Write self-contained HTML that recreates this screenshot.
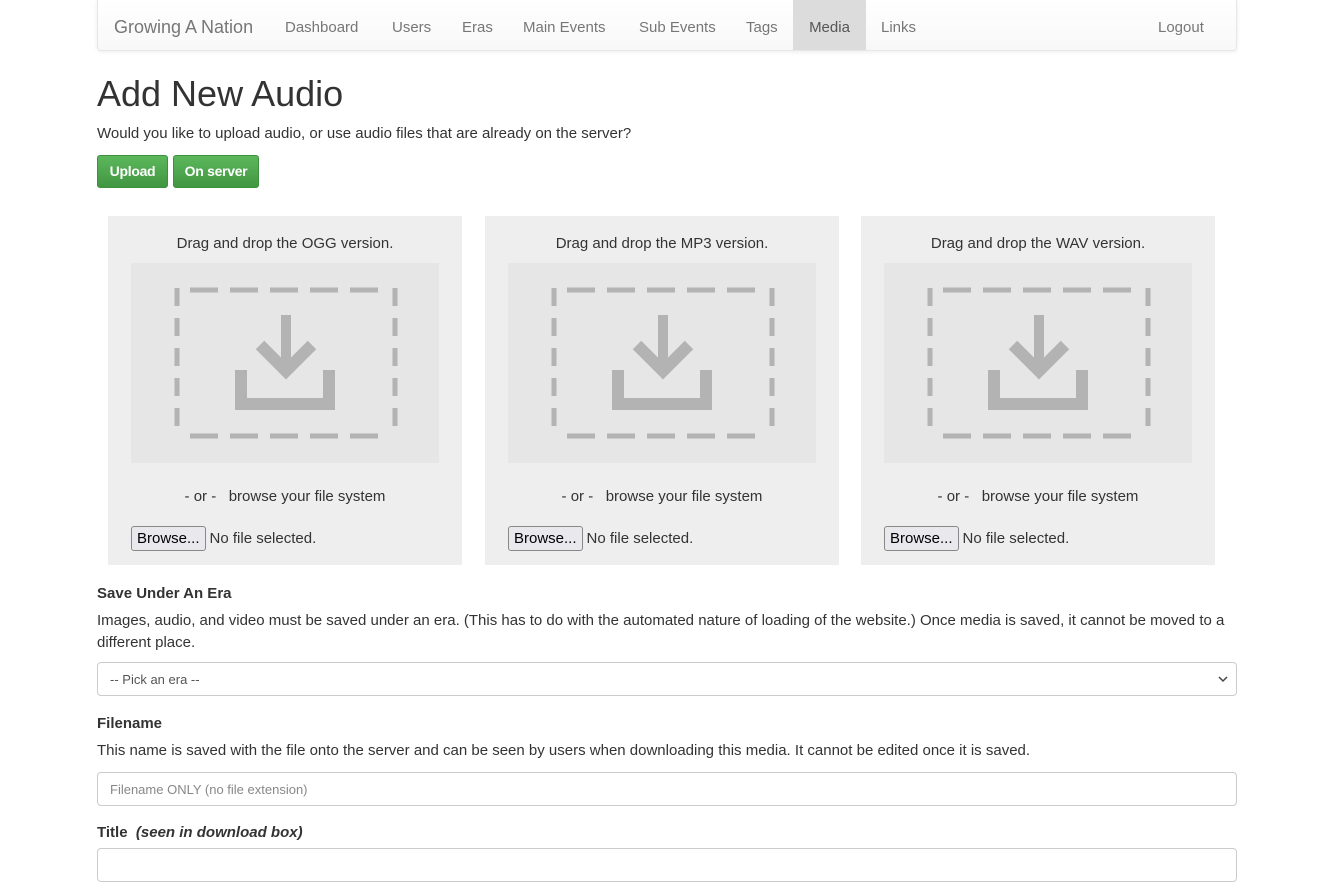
<!DOCTYPE html>
<html><head><meta charset="utf-8"><style>
*{box-sizing:border-box}
body{margin:0;background:#fff;font-family:"Liberation Sans",sans-serif;color:#333;font-size:15px}
.nav{position:absolute;left:97px;top:0;width:1140px;height:51px;background:linear-gradient(#fff,#f8f8f8);border:1px solid #e7e7e7;border-top:none;border-radius:0 0 4px 4px;box-shadow:0 1px 4px rgba(0,0,0,.08)}
.nav span{position:absolute;top:19px;color:#777;font-size:15px}
.nav .brand{font-size:18px;top:17px;left:16px}
.nav .act{background:#dcdcdc;top:0;height:50px;padding-top:19px;left:695px;width:73px;text-align:center;color:#555}
h1{position:absolute;left:97px;top:73px;margin:0;font-weight:400;font-size:36px;color:#333}
.p{position:absolute;left:97px;font-size:15px}
.btn{position:absolute;top:155px;height:33px;background:linear-gradient(#5cb85c,#419641);border:1px solid #3e8f3e;border-radius:3px;color:#fff;font-weight:bold;font-size:14px;text-align:center;line-height:31px;letter-spacing:-.3px}
.panel{position:absolute;top:216px;width:354px;height:349px;background:#eee;text-align:center}
.panel .t{position:absolute;top:19px;width:100%;font-size:15px}
.panel .box{position:absolute;left:23px;top:47px;width:308px;height:200px;background:#e6e6e6}
.panel .or{position:absolute;top:272px;width:100%;font-size:15px}
.panel .fb{position:absolute;left:23px;top:310px;font-size:15px;text-align:left;white-space:nowrap}
.fb b{display:inline-block;font-weight:normal;border:1px solid #888;border-radius:3px;background:#e9e9ed;padding:1px 5px;color:#000;font-size:15px;margin-right:4px;height:25px;line-height:22px}
.lbl{position:absolute;left:97px;font-weight:bold;font-size:15px}
.inp{position:absolute;left:97px;width:1140px;height:34px;border:1px solid #ccc;border-radius:4px;font-size:13px;color:#888;padding:9px 12px}
</style></head><body>
<div class="nav">
<span class="brand">Growing A Nation</span>
<span style="left:187px">Dashboard</span>
<span style="left:294px">Users</span>
<span style="left:364px">Eras</span>
<span style="left:425px">Main Events</span>
<span style="left:541px">Sub Events</span>
<span style="left:648px">Tags</span>
<span class="act">Media</span>
<span style="left:783px">Links</span>
<span style="left:1060px">Logout</span>
</div>
<h1>Add New Audio</h1>
<div class="p" style="top:125px">Would you like to upload audio, or use audio files that are already on the server?</div>
<div class="btn" style="left:97px;width:71px">Upload</div>
<div class="btn" style="left:173px;width:86px">On server</div>

<svg width="0" height="0" style="position:absolute"><defs><g id="ic" fill="none" stroke="#b3b3b3">
<path d="M46 25V175M264 25V175" stroke-width="5" stroke-dasharray="18 12"/>
<path d="M59 27H252M59 173H252" stroke-width="5" stroke-dasharray="28 12"/>
<path d="M110 107V141H198V107" stroke-width="12"/>
<path d="M155 52V104" stroke-width="10"/>
<path d="M129 82L155 108L181 82" stroke-width="12"/>
</g></defs></svg>

<div class="panel" style="left:108px"><div class="t">Drag and drop the OGG version.</div><svg class="box" viewBox="0 0 308 200"><use href="#ic"/></svg><div class="or">- or - &nbsp; browse your file system</div><div class="fb"><b>Browse...</b>No file selected.</div></div>
<div class="panel" style="left:485px"><div class="t">Drag and drop the MP3 version.</div><svg class="box" viewBox="0 0 308 200"><use href="#ic"/></svg><div class="or">- or - &nbsp; browse your file system</div><div class="fb"><b>Browse...</b>No file selected.</div></div>
<div class="panel" style="left:861px"><div class="t">Drag and drop the WAV version.</div><svg class="box" viewBox="0 0 308 200"><use href="#ic"/></svg><div class="or">- or - &nbsp; browse your file system</div><div class="fb"><b>Browse...</b>No file selected.</div></div>

<div class="lbl" style="top:585px">Save Under An Era</div>
<div class="p" style="top:610px;width:1145px;line-height:22px">Images, audio, and video must be saved under an era. (This has to do with the automated nature of loading of the website.) Once media is saved, it cannot be moved to a different place.</div>
<div class="inp" style="top:662px;color:#555">-- Pick an era --<svg style="position:absolute;right:8px;top:13px" width="10" height="7"><path d="M1 1L5 5L9 1" fill="none" stroke="#444" stroke-width="1.5"/></svg></div>
<div class="lbl" style="top:715px">Filename</div>
<div class="p" style="top:742px">This name is saved with the file onto the server and can be seen by users when downloading this media. It cannot be edited once it is saved.</div>
<div class="inp" style="top:772px">Filename ONLY (no file extension)</div>
<div class="lbl" style="top:824px">Title &nbsp;<i>(seen in download box)</i></div>
<div class="inp" style="top:848px"></div>
</body></html>
